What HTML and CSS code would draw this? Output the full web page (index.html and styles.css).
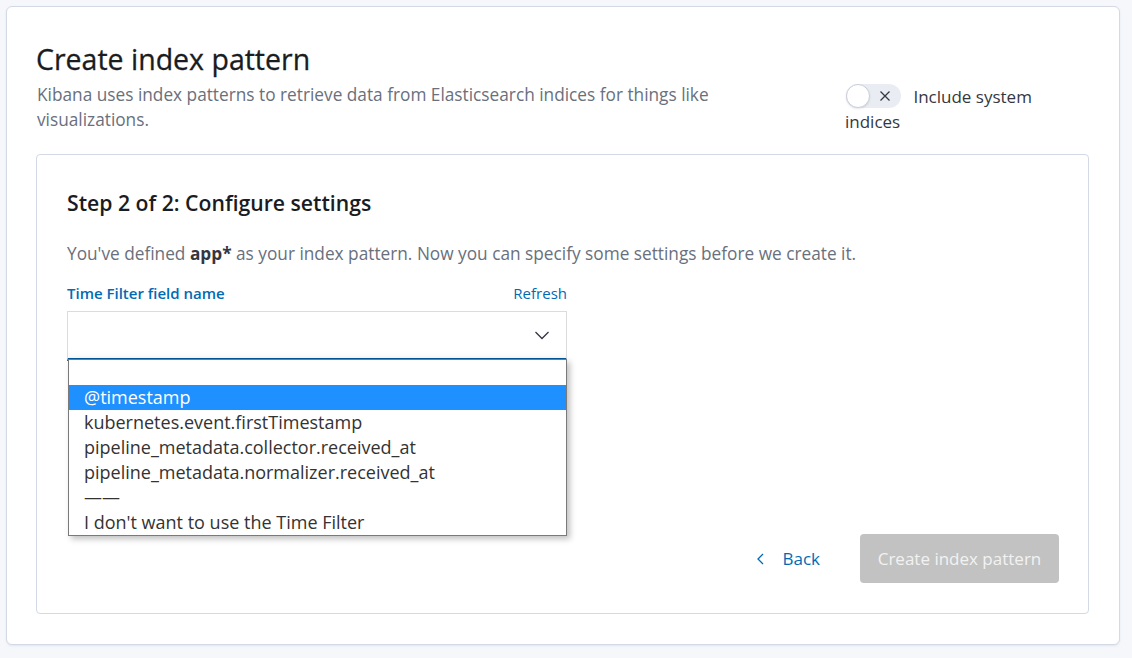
FILE: index.html
```html
<!DOCTYPE html>
<html>
<head>
<meta charset="utf-8">
<link rel="stylesheet" href="styles.css">
</head>
<body>
<div class="page">
  <div class="panel">
    <div class="header">
      <div class="header-text">
        <h1 class="title">Create index pattern</h1>
        <p class="subtitle">Kibana uses index patterns to retrieve data from Elasticsearch indices for things like visualizations.</p>
      </div>
      <div class="system">
        <span class="switch"><span class="knob"></span><svg class="switch-x" width="16" height="16" viewBox="0 0 16 16"><path d="M3.5 3.5L12.5 12.5M12.5 3.5L3.5 12.5" stroke="#343741" stroke-width="1.3" fill="none"/></svg></span>
        <span class="system-label">Include system indices</span>
      </div>
    </div>
    <div class="inner">
      <h2 class="step">Step 2 of 2: Configure settings</h2>
      <p class="desc">You've defined <strong>app*</strong> as your index pattern. Now you can specify some settings before we create it.</p>
      <div class="field">
        <div class="field-head">
          <span class="label">Time Filter field name</span>
          <span class="refresh">Refresh</span>
        </div>
        <div class="select">
          <svg class="chev" width="16" height="16" viewBox="0 0 16 16"><path d="M1.5 5L8 11.5L14.5 5" stroke="#343741" stroke-width="1.3" fill="none"/></svg>
          <ul class="options">
            <li class="opt"></li>
            <li class="opt active">@timestamp</li>
            <li class="opt">kubernetes.event.firstTimestamp</li>
            <li class="opt">pipeline_metadata.collector.received_at</li>
            <li class="opt">pipeline_metadata.normalizer.received_at</li>
            <li class="opt">——</li>
            <li class="opt">I don't want to use the Time Filter</li>
          </ul>
        </div>
      </div>
      <div class="actions">
        <span class="back"><svg width="16" height="16" viewBox="0 0 16 16"><path d="M10 3L5 8L10 13" stroke="#006bb4" stroke-width="1.3" fill="none"/></svg>Back</span>
        <span class="create">Create index pattern</span>
      </div>
    </div>
  </div>
</div>
</body>
</html>
```
FILE: styles.css
```css
* { box-sizing: border-box; }
html, body { margin: 0; padding: 0; }
body {
  background: #f5f7fa;
  font-family: "Open Sans", "Noto Sans", sans-serif;
  color: #1a1c21;
  width: 1132px;
  height: 658px;
  overflow: hidden;
}
.page { padding: 6px 12px 0 6px; }
.panel {
  background: #fff;
  border: 1px solid #d3dae6;
  border-radius: 6px;
  box-shadow: 0 1px 2px rgba(152,162,179,0.2);
  padding: 36px 30px 30px 29px;
  width: 1114px;
  height: 639px;
}
.header {
  display: flex;
  justify-content: space-between;
  align-items: flex-start;
}
.header-text { width: 720px; }
.title {
  margin: 0;
  font-size: 28.5px;
  font-weight: 400;
  line-height: 32px;
  color: #1a1c21;
  -webkit-text-stroke: 0.3px #1a1c21;
}
.subtitle {
  margin: 7px 0 0 1px;
  font-size: 17.25px;
  line-height: 25px;
  color: #69707d;
}
.system {
  width: 214px;
  margin-top: 41px;
  margin-right: 30px;
  font-size: 17px;
  line-height: 25px;
  color: #343741;
}
.switch {
  display: inline-block;
  position: relative;
  vertical-align: top;
  width: 55px;
  height: 24px;
  border-radius: 12px;
  background: #e9edf3;
  margin: 0 8px 0 1px;
}
.knob {
  position: absolute;
  left: 0;
  top: 0;
  width: 24px;
  height: 24px;
  border-radius: 50%;
  background: #fff;
  border: 1px solid #c9cfd8;
  box-shadow: 0 1px 2px rgba(0,0,0,0.1);
}
.switch-x { position: absolute; right: 8px; top: 4px; }
.inner {
  margin-top: 20px;
  border: 1px solid #d3dae6;
  border-radius: 4px;
  padding: 34px 29px 30px 30px;
  height: 460px;
  display: flex;
  flex-direction: column;
}
.step {
  margin: 0;
  font-size: 21.2px;
  font-weight: 600;
  line-height: 28px;
  color: #1a1c21;
}
.desc {
  margin: 25px 0 0;
  font-size: 17.25px;
  line-height: 24px;
  color: #69707d;
}
.desc strong { color: #343741; font-weight: 700; }
.field { width: 500px; margin-top: 16px; }
.field-head {
  display: flex;
  justify-content: space-between;
  font-size: 15px;
  line-height: 22px;
}
.label { color: #006bb4; font-weight: 600; }
.refresh { color: #006bb4; }
.select {
  position: relative;
  margin-top: 7px;
  height: 50px;
  border: 1px solid #dcdcdc;
  border-bottom: 3px solid #00589c;
  background: #fff;
  box-shadow: inset 0 -8px 10px -8px rgba(0,0,0,0.06);
}
.chev { position: absolute; right: 16px; top: 15px; }
.options {
  position: absolute;
  left: 0;
  top: 47px;
  width: 499px;
  margin: 0;
  padding: 0;
  list-style: none;
  background: #fff;
  border: 1px solid #7a7a7a;
  box-shadow: 3px 3px 6px rgba(0,0,0,0.25);
  z-index: 2;
}
.opt {
  height: 25px;
  line-height: 25px;
  padding-left: 15px;
  font-size: 18px;
  color: #333;
  white-space: nowrap;
}
.opt.active { background: #1e90ff; color: #fff; }
.actions {
  margin-top: auto;
  display: flex;
  justify-content: flex-end;
  align-items: center;
  gap: 40px;
}
.back {
  display: flex;
  align-items: center;
  gap: 13px;
  color: #006bb4;
  font-size: 17px;
}
.create {
  display: block;
  width: 199px;
  height: 49px;
  line-height: 49px;
  text-align: center;
  background: #c2c2c2;
  color: #f2f2f2;
  border-radius: 4px;
  font-size: 17px;
}
```
